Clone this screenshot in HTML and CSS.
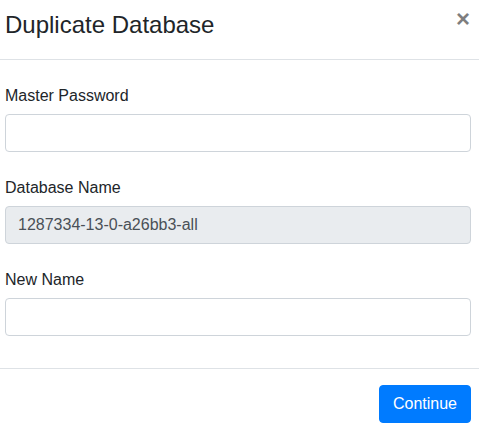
FILE: index.html
```html
<!DOCTYPE html>
<html lang="en">
<head>
<meta charset="utf-8">
<title>Duplicate Database</title>
<link rel="stylesheet" href="styles.css">
</head>
<body>
<div class="modal-content">
  <div class="modal-header">
    <h4 class="modal-title">Duplicate Database</h4>
    <button type="button" class="close" aria-label="Close">×</button>
  </div>
  <div class="modal-body">
    <div class="form-group">
      <label class="form-label">Master Password</label>
      <input class="form-control" type="password">
    </div>
    <div class="form-group">
      <label class="form-label">Database Name</label>
      <input class="form-control" type="text" value="1287334-13-0-a26bb3-all" readonly>
    </div>
    <div class="form-group">
      <label class="form-label">New Name</label>
      <input class="form-control" type="text">
    </div>
  </div>
  <div class="modal-footer">
    <button type="button" class="btn-primary">Continue</button>
  </div>
</div>
</body>
</html>
```
FILE: styles.css
```css
html, body {
  margin: 0;
  padding: 0;
  background: #fff;
}
body {
  font-family: "Liberation Sans", Arial, sans-serif;
  font-size: 16px;
  line-height: 1.5;
  color: #212529;
}
.modal-content {
  display: flex;
  flex-direction: column;
}
.modal-header {
  display: flex;
  align-items: flex-start;
  padding: 7px 9px 16px 5px;
  border-bottom: 1px solid #dee2e6;
}
.modal-title {
  flex: 1;
  margin: 0;
  font-size: 24px;
  font-weight: 500;
  line-height: 36px;
}
.close {
  margin-top: 0;
  padding: 0;
  border: 0;
  background: transparent;
  font-family: "Liberation Sans", Arial, sans-serif;
  font-size: 24px;
  font-weight: 700;
  line-height: 1;
  color: #000;
  opacity: 0.5;
  text-shadow: 0 1px 0 #fff;
  cursor: pointer;
}
.modal-body {
  padding: 24px 8px 8px 5px;
}
.form-group {
  margin-bottom: 24px;
}
.form-label {
  display: block;
  margin-bottom: 6px;
  line-height: 24px;
}
.form-control {
  display: block;
  box-sizing: border-box;
  width: 100%;
  height: 38px;
  margin: 0;
  padding: 6px 12px;
  font-family: "Liberation Sans", Arial, sans-serif;
  font-size: 16px;
  line-height: 24px;
  color: #495057;
  background: #fff;
  border: 1px solid #ced4da;
  border-radius: 4px;
  outline: none;
}
.form-control[readonly] {
  background: #e9ecef;
}
.modal-footer {
  display: flex;
  justify-content: flex-end;
  padding: 16px 8px 16px 5px;
  border-top: 1px solid #dee2e6;
}
.btn-primary {
  box-sizing: border-box;
  height: 38px;
  padding: 6px 13px;
  font-family: "Liberation Sans", Arial, sans-serif;
  font-size: 16px;
  line-height: 24px;
  color: #fff;
  background: #007bff;
  border: 1px solid #007bff;
  border-radius: 4px;
  cursor: pointer;
}
```
